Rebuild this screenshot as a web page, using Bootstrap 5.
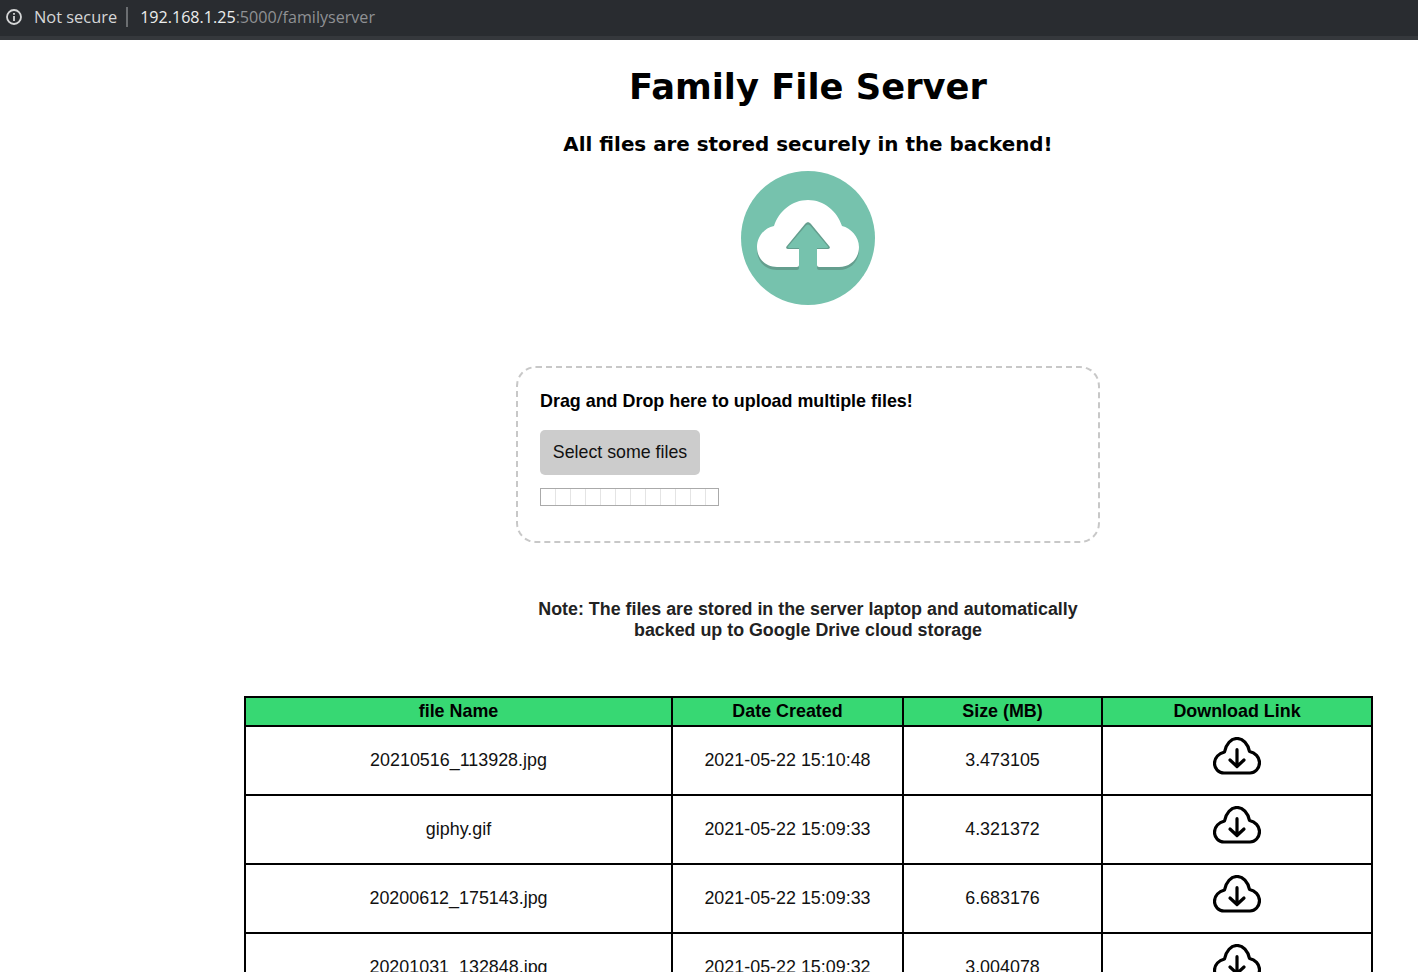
<!DOCTYPE html>
<html lang="en">
<head>
<meta charset="UTF-8">
<title>Family File Server</title>
<link href="https://cdn.jsdelivr.net/npm/bootstrap@5.3.0/dist/css/bootstrap.min.css" rel="stylesheet">
<style>
    html, body { height: 972px; overflow: hidden; }
    body { background: #fff; color: #000; font-family: "Liberation Sans", Arial, sans-serif; }
    .addr-bar { height: 40px; background: #292c30; border-bottom: 4px solid #35383c; font-family: "Open Sans", "Noto Sans", sans-serif; font-size: 16.4px; line-height: 32px; padding: 0 0 2px 5px; color: #d5d6d7; }
    .addr-ico { margin-right: 11px; }
    .addr-sep { width: 2px; height: 20px; background: #6b6e71; margin: 0 12px 0 9px; }
    .addr-url { font-size: 16.1px; }
    .addr-host { color: #eceded; }
    .addr-path { color: #8f9194; }
    .page-wrap { width: 1128px; margin-left: 244px; }
    .site-title { font-family: "DejaVu Sans", Verdana, sans-serif; font-weight: 700; font-size: 35.3px; line-height: 42px; margin: 26px 0 0; }
    .site-sub { font-family: "DejaVu Sans", Verdana, sans-serif; font-weight: 700; font-size: 19.9px; line-height: 26px; margin: 24px 0 13px; }
    .drop-box { width: 584px; height: 177px; border: 2px dashed #c8c8c8; border-radius: 20px; margin: 61px auto 0; padding: 22px 22px; }
    .drop-title { font-size: 17.9px; font-weight: 700; line-height: 22px; margin: 0 0 18px; }
    .pick-btn { background: #ccc; border: 0; border-radius: 5px; width: 160px; height: 45px; font-size: 17.8px; color: #111; padding: 0; display: block; }
    .pick-btn:hover { background: #ccc; color: #111; }
    .prog-empty { width: 179px; height: 18px; border: 1px solid #aaa; margin-top: 13px; background: repeating-linear-gradient(90deg, #fff 0, #fff 14px, #e4e4e4 14px, #e4e4e4 15px); }
    .note-text { font-size: 17.85px; font-weight: 700; line-height: 21px; color: #222; margin: 56px 0 55px; }
    .file-table { width: 1127px; border-collapse: collapse; table-layout: fixed; font-size: 17.9px; }
    .file-table th, .file-table td { border: 2px solid #000; text-align: center; padding: 0; }
    .file-table th { background: #37d873; height: 29px; line-height: 24px; padding-bottom: 2px; font-weight: 700; }
    .file-table td { height: 69px; vertical-align: middle; color: #111; }
    .dl-ico { display: block; margin: -9px auto 0; width: 48px; height: 38px; }
</style>
</head>
<body>
    <!-- Browser address bar -->
    <div class="addr-bar d-flex align-items-center">
        <svg width="18" height="18" viewBox="0 0 18 18" class="addr-ico" fill="none" stroke="#d5d6d7">
            <circle cx="9" cy="9" r="7" stroke-width="1.8"/>
            <path d="M9 8v5M9 5v1.800" stroke-width="1.800"/>
        </svg>
        <span>Not secure</span>
        <span class="addr-sep"></span>
        <span class="addr-url"><span class="addr-host">192.168.1.25</span><span class="addr-path">:5000/familyserver</span></span>
    </div>

    <div class="page-wrap text-center">
        <h1 class="site-title">Family File Server</h1>
        <h2 class="site-sub">All files are stored securely in the backend!</h2>

        <svg width="134" height="134" viewBox="0 0 134 134" class="d-block mx-auto">
            <circle cx="67" cy="67" r="67" fill="#76c2ad"/>
            <path fill="#649e8e" transform="translate(0 3)" d="M56 96H36C24 96 16 87 16 76C16 66 23 57 33 55C38 40 51 29 67 29C83 29 96 40 101 55C110 57 118 66 118 76C118 87 110 96 98 96H78C77 96 76 95 76 94V70H58V94C58 95 57 96 56 96Z"/>
            <path fill="#fff" d="M56 96H36C24 96 16 87 16 76C16 66 23 57 33 55C38 40 51 29 67 29C83 29 96 40 101 55C110 57 118 66 118 76C118 87 110 96 98 96H78C77 96 76 95 76 94V70H58V94C58 95 57 96 56 96Z"/>
            <path fill="#649e8e" d="M45.500 75.500L64 53C66 50.500 68 50.500 70 53L88.500 75.500C89.500 77 88.500 78 87 78H47C45.500 78 44.500 77 45.500 75.500Z"/>
            <path fill="#76c2ad" d="M58 77H48C47 77 46.500 76 47.500 75L64.500 55C66 53 68 53 69.500 55L86.500 75C87.500 76 87 77 86 77H76V97H58Z"/>
        </svg>

        <div class="drop-box text-start">
            <p class="drop-title">Drag and Drop here to upload multiple files!</p>
            <button type="button" class="btn pick-btn">Select some files</button>
            <div class="prog-empty"></div>
        </div>

        <p class="note-text">Note: The files are stored in the server laptop and automatically<br>backed up to Google Drive cloud storage</p>

        <table class="file-table" id="file-table">
            <colgroup>
                <col style="width: 427px"><col style="width: 231px"><col style="width: 199px"><col style="width: 270px">
            </colgroup>
            <thead>
                <tr><th>file Name</th><th>Date Created</th><th>Size (MB)</th><th>Download Link</th></tr>
            </thead>
            <tbody id="file-rows"></tbody>
        </table>
    </div>

    <script>
        const files = [
            ["20210516_113928.jpg", "2021-05-22 15:10:48", "3.473105"],
            ["giphy.gif", "2021-05-22 15:09:33", "4.321372"],
            ["20200612_175143.jpg", "2021-05-22 15:09:33", "6.683176"],
            ["20201031_132848.jpg", "2021-05-22 15:09:32", "3.004078"]
        ];
        const icon = `<svg class="dl-ico" viewBox="0 0 48 38" fill="none" stroke="#000" stroke-width="3.2" stroke-linecap="round" stroke-linejoin="round">
            <path d="M11 36C5.500 36 1.500 31.500 1.500 26.500C1.500 20.500 6 16.500 11.500 15C13 7 18 1.500 24 1.500C30 1.500 35 7 36.500 14.500C42 15.500 46.500 20 46.500 25.500C46.500 31.500 42 36 37 36Z"/>
            <path d="M24 12.700V29M17 23L24 29.500L31 23"/>
        </svg>`;
        document.getElementById('file-rows').innerHTML = files.map(f =>
            `<tr><td>${f[0]}</td><td>${f[1]}</td><td>${f[2]}</td><td>${icon}</td></tr>`
        ).join('');
    </script>
    <script src="https://cdn.jsdelivr.net/npm/bootstrap@5.3.0/dist/js/bootstrap.bundle.min.js"></script>
</body>
</html>
